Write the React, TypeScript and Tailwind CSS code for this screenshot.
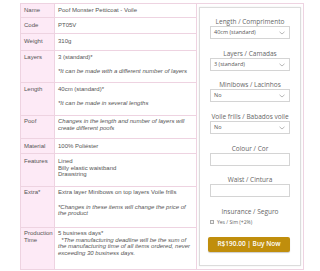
import type { ReactNode } from "react"

type Row = {
  label: ReactNode
  rowClass: string
  padClass: string
  content: ReactNode
}

const rows: Row[] = [
  { label: "Name", rowClass: "h-[14px]", padClass: "pt-[3px]", content: "Poof Monster Petticoat - Voile" },
  { label: "Code", rowClass: "h-[16px]", padClass: "pt-[4px]", content: "PT05V" },
  { label: "Weight", rowClass: "h-[17px]", padClass: "pt-[4px]", content: "310g" },
  {
    label: "Layers",
    rowClass: "h-[32px]",
    padClass: "pt-[3px]",
    content: (
      <>
        <p>3 (standard)*</p>
        <p className="mt-[7px] italic">*It can be made with a different number of layers</p>
      </>
    )
  },
  {
    label: "Length",
    rowClass: "h-[33px]",
    padClass: "pt-[3px]",
    content: (
      <>
        <p>40cm (standard)*</p>
        <p className="mt-[7px] italic">*It can be made in several lengths</p>
      </>
    )
  },
  {
    label: "Poof",
    rowClass: "h-[23px]",
    padClass: "pt-[2px]",
    content: <p className="italic">Changes in the length and number of layers will create different poofs</p>
  },
  { label: "Material", rowClass: "h-[15px]", padClass: "pt-[4px]", content: "100% Poliéster" },
  {
    label: "Features",
    rowClass: "h-[33px]",
    padClass: "pt-[4px]",
    content: (
      <>
        <p>Lined</p>
        <p>Billy elastic waistband</p>
        <p>Drawstring</p>
      </>
    )
  },
  {
    label: "Extra*",
    rowClass: "h-[41px]",
    padClass: "pt-[2px]",
    content: (
      <>
        <p>Extra layer Minibows on top layers Voile frills</p>
        <p className="mt-[8px] italic">*Changes in these items will change the price of the product</p>
      </>
    )
  },
  {
    label: (
      <>
        Production
        <br />
        Time
      </>
    ),
    rowClass: "h-[42px]",
    padClass: "pt-[2px]",
    content: (
      <>
        <p>5 business days*</p>
        <p className="italic">
          {"\u00a0\u00a0*The manufacturing deadline will be the sum of the manufacturing time of all items ordered, never exceeding 30 business days."}
        </p>
      </>
    )
  }
]

function Chevron() {
  return (
    <svg width="6" height="4" viewBox="0 0 6 4" fill="none">
      <path d="M0.5 0.8 L3 3 L5.5 0.8" stroke="#888" strokeWidth="0.6" />
    </svg>
  )
}

function Select({ value }: { value: string }) {
  return (
    <div className="flex h-[13px] items-center justify-between border border-[#d4d4d4] bg-white pl-[3px] pr-[4px] text-[5.5px] text-[#555]">
      <span>{value}</span>
      <Chevron />
    </div>
  )
}

function Field({ label, first, tight, children }: { label: string; first?: boolean; tight?: boolean; children: ReactNode }) {
  return (
    <div className={first ? "" : tight ? "mt-[9px]" : "mt-[10px]"}>
      <div className="h-[9px] text-center text-[6.5px] leading-[9px] text-[#666]">{label}</div>
      {children}
    </div>
  )
}

function OrderBox() {
  return (
    <div className="mx-[2px] my-[3px] h-[259px] border border-[#dcdcdc] bg-white px-[10px] pt-[9px] font-['Open_Sans',sans-serif] shadow-[0_0_2px_rgba(0,0,0,0.08)]">
      <Field label="Length / Comprimento" first>
        <Select value="40cm (standard)" />
      </Field>
      <Field label="Layers / Camadas">
        <Select value="3 (standard)" />
      </Field>
      <Field label="Minibows / Lacinhos" tight>
        <Select value="No" />
      </Field>
      <Field label="Voile frills / Babados voile">
        <Select value="No" />
      </Field>
      <Field label="Colour / Cor">
        <div className="h-[13px] border border-[#d4d4d4] bg-white" />
      </Field>
      <Field label="Waist / Cintura" tight>
        <div className="h-[13px] border border-[#d4d4d4] bg-white" />
      </Field>
      <div className="mt-[10px] h-[9px] text-center text-[6.5px] leading-[9px] text-[#666]">Insurance / Seguro</div>
      <div className="mt-[3px] flex h-[6px] items-center text-[5px] text-[#666]">
        <span className="inline-block h-[4px] w-[4px] border border-[#aaa] bg-[#f2f2f2]" />
        <span className="ml-[3px]">Yes / Sim (+2%)</span>
      </div>
      <button className="-mx-[2px] mt-[12px] flex h-[15px] w-[82px] items-center justify-center rounded-[2px] bg-[#c08e0c] text-[6.5px] font-semibold text-white shadow-[0_1px_1px_rgba(0,0,0,0.2)]">
        R$190.00 | Buy Now
      </button>
    </div>
  )
}

export default function App() {
  return (
    <div className="h-[271px] w-[320px] bg-white pt-[3px] pl-[20px]">
      <table className="w-[283px] table-fixed border-collapse font-['Liberation_Sans',Arial,sans-serif] text-[6px] leading-[6.5px] text-[#555]">
        <colgroup>
          <col className="w-[34px]" />
          <col className="w-[142px]" />
          <col className="w-[107px]" />
        </colgroup>
        <tbody>
          {rows.map((row, i) => (
            <tr key={i} className={row.rowClass}>
              <td className={`border border-[#eed3e1] bg-[#fdeaf6] pl-[3px] align-top ${row.padClass}`}>{row.label}</td>
              <td className={`border border-[#eed3e1] pl-[3px] pr-[3px] align-top ${row.padClass}`}>{row.content}</td>
              {i === 0 && (
                <td rowSpan={10} className="border border-[#eed3e1] p-0 align-top">
                  <OrderBox />
                </td>
              )}
            </tr>
          ))}
        </tbody>
      </table>
    </div>
  )
}
